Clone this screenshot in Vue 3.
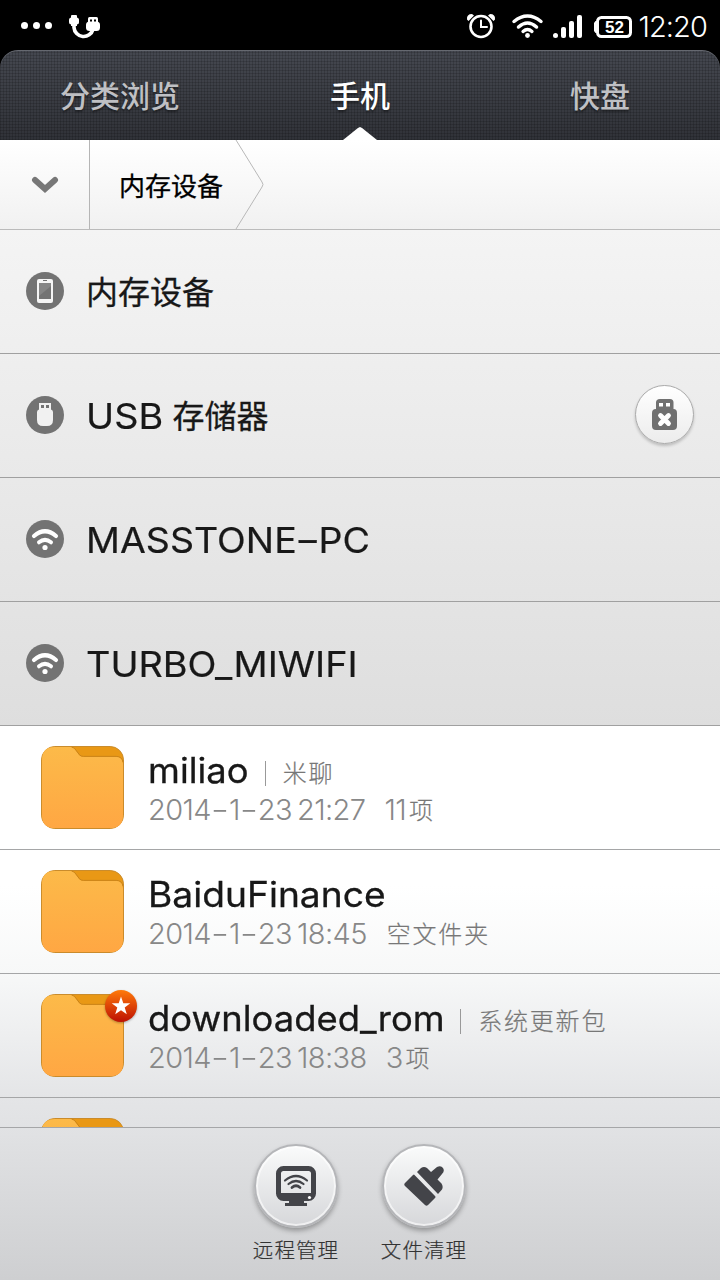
<script setup>
const tabs = [
  { name: '分类浏览', active: false },
  { name: '手机', active: true },
  { name: '快盘', active: false },
]
const devices = [
  { name: '内存设备', icon: 'phone', cls: 'cjk' },
  { name: 'USB', suffix: '存储器', icon: 'usb', cls: 'usb', eject: true },
  { name: 'MASSTONE-PC', icon: 'wifi', cls: 'mass' },
  { name: 'TURBO_MIWIFI', icon: 'wifi', cls: 'turbo' },
]
const files = [
  { name: 'miliao', note: '米聊', date: '2014-1-23', time: '21:27', num: '11', unit: '项', cls: 'f1' },
  { name: 'BaiduFinance', date: '2014-1-23', time: '18:45', num: '', unit: '空文件夹', cls: 'f2' },
  { name: 'downloaded_rom', note: '系统更新包', date: '2014-1-23', time: '18:38', num: '3', unit: '项', starred: true, cls: 'f3' },
  { name: '', cls: 'f4' },
]
// Splits a label so that hyphens can be drawn wider than the font's own.
const pieces = (s) => s.split(/(-)/)
</script>

<template>
  <div class="screen">
    <header class="status">
      <svg class="notices" width="110" height="50" viewBox="0 0 110 50">
        <g fill="#fff">
          <circle cx="24.500" cy="25.500" r="3.500" /><circle cx="36.500" cy="25.500" r="3.500" /><circle cx="48.500" cy="25.500" r="3.500" />
          <rect x="71" y="15" width="6" height="6" rx="1" />
          <rect x="69" y="17.500" width="10" height="7" rx="2.500" />
          <path d="M71 23h6v3h-6z" />
          <rect x="88" y="17" width="10" height="8" rx="1.500" />
          <rect x="86" y="21.500" width="14" height="9.500" rx="3.500" />
        </g>
        <path d="M74 24v3.500a9.700 9.700 0 0 0 19 2" fill="none" stroke="#fff" stroke-width="3.600" />
        <path d="M90 19.500h2v2h-2zM94 19.500h2v2h-2z" fill="#000" />
      </svg>
      <div class="system">
        <svg width="170" height="50" viewBox="0 0 170 50">
          <g fill="none" stroke="#fff" stroke-linecap="round">
            <circle cx="16" cy="26.500" r="10.500" stroke-width="2.600" />
            <path d="M16 20.500v6.500h6" stroke-width="2" />
            <path d="M49 21.500Q62.500 10.500 76 21.500" stroke-width="3.500" />
            <path d="M53.500 27Q62.500 19 71.500 27" stroke-width="3.500" />
            <path d="M58 31.500Q62.500 27.500 67 31.500" stroke-width="3.300" />
          </g>
          <path d="M2 19.500Q1.500 14 7 14L9 15.500 3.500 21zM30 19.500Q30.500 14 25 14L23 15.500 28.500 21z" fill="#fff" />
          <circle cx="62.500" cy="35.500" r="2.400" fill="#fff" />
          <g fill="#fff">
            <circle cx="90.500" cy="35.500" r="2.500" />
            <rect x="96" y="27" width="5" height="11" rx="2" /><rect x="104" y="21" width="5" height="17" rx="2" />
            <rect x="112" y="15" width="5" height="23" rx="2" />
            <path d="M132 21v12h-1.500l-1.500-2v-8l1.500-2z" />
          </g>
          <rect x="132.500" y="17.500" width="33" height="19" rx="4" fill="none" stroke="#fff" stroke-width="3" />
          <text x="149.500" y="33" text-anchor="middle" class="battery">52</text>
        </svg>
        <span class="clock">12:20</span>
      </div>
    </header>

    <nav class="tabs">
      <div v-for="t in tabs" :key="t.name" class="tab" :class="{ active: t.active }">{{ t.name }}</div>
    </nav>

    <div class="crumbs">
      <div class="expand">
        <svg width="28" height="20" viewBox="0 0 28 20"><path d="M4 5l10 9 10-9" fill="none" stroke="#777" stroke-width="6" stroke-linecap="round" /></svg>
      </div>
      <div class="crumb">内存设备</div>
      <svg class="chevron" width="30" height="89" viewBox="0 0 30 89"><path d="M1 0L27 42q2 2.500 0 5L1 89" fill="none" stroke="#b8b8b8" /></svg>
    </div>

    <section class="devices">
      <div v-for="d in devices" :key="d.name" class="device">
        <svg class="dicon" width="38" height="38" viewBox="0 0 38 38">
          <circle cx="19" cy="19" r="19" fill="#737373" />
          <g v-if="d.icon === 'phone'">
            <rect x="11" y="7" width="16" height="24" rx="2" fill="#f5f5f5" />
            <rect x="13" y="11" width="12" height="16" fill="#737373" />
            <path d="M25 11v3L13 24V11z" fill="#858585" />
            <path d="M17 8.500h4" stroke="#737373" />
          </g>
          <g v-else-if="d.icon === 'usb'">
            <path d="M13 7h12v6.500q2 .5 2 2.500v8q0 6-6 6h-4q-6 0-6-6v-8q0-2 2-2.500z" fill="#f1f1f1" />
            <path d="M15 9h3v3h-3zM20 9h3v3h-3z" fill="#737373" />
          </g>
          <g v-else fill="none" stroke="#fff" stroke-linecap="round">
            <path d="M8 16Q19 6.500 30 16" stroke-width="4.200" /><path d="M13 22.300Q19 17.500 25 22.300" stroke-width="4" />
            <circle cx="19" cy="27.500" r="2.600" fill="#fff" stroke="none" />
          </g>
        </svg>
        <span class="dname" :class="d.cls"><span v-for="(p, i) in pieces(d.name)" :key="i" :class="{ dash: p === '-' }">{{ p }}</span></span>
        <span v-if="d.suffix" class="dname cjk suffix">{{ d.suffix }}</span>
        <div v-if="d.eject" class="eject">
          <svg width="26" height="32" viewBox="0 0 26 32">
            <path d="M8 0h10q3.500 0 3.500 3.500V10Q25 10 25 14v13q0 4-4 4H4q-4 0-4-4V14q0-4 4-4V3.500Q4 0 8 0z" fill="#707070" />
            <path d="M7 4h4v3.500H7zM14 4h4v3.500h-4z" fill="#fff" />
            <path d="M8.500 16.500l8 8M16.500 16.500l-8 8" stroke="#fff" stroke-width="4.800" stroke-linecap="round" />
          </svg>
        </div>
      </div>
    </section>

    <main class="files">
      <div v-for="f in files" :key="f.cls" class="file" :class="f.cls">
        <div class="folder">
          <svg width="83" height="83" viewBox="0 0 84 84">
            <defs>
              <linearGradient id="fold" x1="0" y1="0" x2="0" y2="1"><stop offset="0" stop-color="#fcba49" /><stop offset="1" stop-color="#ffa743" /></linearGradient>
            </defs>
            <rect x=".5" y=".5" width="83" height="83" rx="13.500" fill="#e99815" stroke="#c98a2a" />
            <path d="M1 14Q1 1 14 1H30q3.500 0 5.500 4l3.500 4.500q1.500 1.500 4 1.500H76q7 0 7 8V70q0 13-13 13H14Q1 83 1 70z" fill="url(#fold)" />
            <path d="M31 1q3 .5 5 4l3 4q1.500 1.500 4 1.500H76q6 0 7 6" fill="none" stroke="#c98319" />
          </svg>
          <svg v-if="f.starred" class="star" width="36" height="36" viewBox="0 0 36 36">
            <defs><linearGradient id="badge" x1="0" y1="0" x2="0" y2="1"><stop offset="0" stop-color="#ff7a0a" /><stop offset="1" stop-color="#bd1003" /></linearGradient></defs>
            <circle cx="18" cy="18" r="16" fill="url(#badge)" />
            <path d="M18 8.500l2.300 6.700h7l-5.600 4.200 2.100 6.900L18 22.200l-5.800 4.100 2.100-6.900-5.600-4.200h7z" fill="#fff" />
          </svg>
        </div>
        <div v-if="f.name" class="info">
          <div class="line1">
            <span class="fname">{{ f.name }}</span>
            <i v-if="f.note" class="bar"></i>
            <span v-if="f.note" class="note">{{ f.note }}</span>
          </div>
          <div class="line2">
            <span class="date"><span v-for="(p, i) in pieces(f.date)" :key="i" :class="{ dash: p === '-' }">{{ p }}</span></span><span class="time">{{ f.time }}</span>
            <span class="count"><span class="num">{{ f.num }}</span><span class="unit">{{ f.unit }}</span></span>
          </div>
        </div>
      </div>
    </main>

    <footer class="actions">
      <div class="action">
        <div class="round">
          <svg width="40" height="40" viewBox="0 0 40 40">
            <rect x="2.500" y="2.500" width="35" height="30" rx="5" fill="none" stroke="#434449" stroke-width="5" />
            <path d="M4 27h32v6H4zM13 34h15v3h3v3H9v-3h4z" fill="#434449" />
            <circle cx="33.500" cy="31.500" r="1.600" fill="#fff" />
            <g fill="none" stroke="#434449" stroke-width="2.200" stroke-linecap="round">
              <path d="M9 14.500Q20 5.500 31 14.500" /><path d="M12.500 18Q20 12 27.500 18" /><path d="M16 21.500Q20 18 24 21.500" stroke-width="2.800" />
            </g>
          </svg>
        </div>
        <span>远程管理</span>
      </div>
      <div class="action">
        <div class="round">
          <svg width="40" height="40" viewBox="0 0 40 40" fill="#434449">
            <path d="M10.500 9L31 30q1 1 0 2l-7 7q-1.500 1.500-3 0L1 20q-1.500-1.500 0-3l8-8q1-1 1.500 0z" />
            <path d="M13 6l4-4q3-2 6 0l4 4 6-5q4-2 6 1 2 3-1 6l-4.500 5.500 4 4q2 3 .5 6L34 28z" />
          </svg>
        </div>
        <span>文件清理</span>
      </div>
    </footer>
  </div>
</template>

<style>
body { background: #000; overflow: hidden; }
</style>
<style scoped>
.screen { width: 720px; height: 1280px; display: flex; flex-direction: column; overflow: hidden; background: #000; font-family: "Inter", "Noto Sans CJK SC", sans-serif; color: #181818; }
svg { display: block; flex: none; }
.status { height: 50px; flex: none; display: flex; justify-content: space-between; color: #fff; }
.system { display: flex; margin-right: 12px; }
.battery { font: bold 17px "Liberation Sans", sans-serif; fill: #fff; }
.clock { width: 72px; text-align: right; white-space: nowrap; font: 300 29px/54px "Inter", sans-serif; letter-spacing: -0.9px; margin-right: 1px; }
.tabs { height: 90px; flex: none; display: grid; grid-template-columns: 1fr 1fr 1fr; border-radius: 18px 18px 0 0; box-shadow: inset 0 1px #666970;
  background: repeating-linear-gradient(0deg, rgba(0,0,0,.15) 0 1px, transparent 1px 3px), repeating-linear-gradient(90deg, rgba(0,0,0,.15) 0 1px, transparent 1px 3px), linear-gradient(#454850, #303238); }
.tab { position: relative; text-align: center; font: 500 30px/88px "Noto Sans CJK SC", sans-serif; color: #bfc0c4; text-shadow: 0 2px 2px rgba(0,0,0,.4); }
.tab.active { color: #fff; }
.tab.active::after { content: ""; position: absolute; left: 103px; bottom: 0; width: 34px; height: 13px; background: #fff; clip-path: polygon(0 100%, 44% 8%, 50% 0, 56% 8%, 100% 100%); }
.crumbs { height: 89px; flex: none; display: flex; background: linear-gradient(#fff, #f1f1f1); border-bottom: 1px solid #bbb; }
.expand { width: 89px; border-right: 1px solid #b5b5b5; display: flex; align-items: center; justify-content: center; }
.crumb { padding-left: 29px; width: 116px; white-space: nowrap; font: 26px/90px "Noto Sans CJK SC", sans-serif; color: #000; -webkit-text-stroke: .3px #000; }
.devices { flex: none; background: linear-gradient(#f4f4f4, #dedede); }
.device { height: 123px; border-bottom: 1px solid #a0a0a0; display: flex; align-items: center; padding: 0 26px; }
.dicon { margin-bottom: 2px; }
.dname { margin-left: 22px; font-size: 36px; line-height: 50px; white-space: nowrap; transform: scaleX(1.05); transform-origin: 0 50%; -webkit-text-stroke: .2px #181818; }
.dname.mass { transform: scaleX(1.043); }
.dname.cjk { font: 32px/50px "Noto Sans CJK SC", sans-serif; margin-bottom: 3px; transform: none; -webkit-text-stroke: .3px #181818; }
.dname.suffix { margin-left: 13px; }
.dash { display: inline-block; width: 18px; text-align: center; letter-spacing: 0; transform: scaleX(1.4); }
.dname .dash { width: 21px; transform: scaleX(1.5); }
.eject { margin-left: auto; margin-bottom: 2px; width: 57px; height: 57px; border: 1px solid #aaa; border-radius: 50%; background: linear-gradient(#fff, #ececec); box-shadow: 0 2px 3px rgba(0,0,0,.2); display: flex; align-items: center; justify-content: center; }
.files { flex: 1; min-height: 0; overflow: hidden; background: linear-gradient(#fff 0, #fff 160px, #f7f8f8 248px, #e4e5e7 371px, #e1e2e4 401px); }
.file { height: 123px; border-bottom: 1px solid #a5a6a7; display: flex; padding-left: 41px; }
.folder { position: relative; width: 83px; height: 83px; margin-top: 20px; }
.star { position: absolute; left: 62px; top: -6px; filter: drop-shadow(0 1px 1px rgba(0,0,0,.3)); }
.info { margin-left: 24px; }
.line1 { display: flex; height: 44px; margin-top: 22px; align-items: center; }
.fname { font-size: 35px; white-space: nowrap; transform: scaleX(1.04); transform-origin: 0 50%; -webkit-text-stroke: .3px #181818; }
.f2 .fname { transform: scaleX(1.062); }
.bar { width: 1px; height: 25px; background: #999; margin: 6px 17px 0 20px; }
.f3 .bar { margin-left: 27px; }
.note, .unit { font: 300 24px/34px "Noto Sans CJK SC", sans-serif; letter-spacing: 1.8px; color: #777; -webkit-text-stroke: .2px #777; }
.note { margin-top: 3px; white-space: nowrap; }
.unit { margin: -2px 0 0 3px; }
.f2 .unit { margin-left: 1px; }
.line2 { display: flex; height: 36px; align-items: center; color: #888; font: 300 29px/36px "Inter", sans-serif; letter-spacing: -.6px; white-space: nowrap; }
.time { margin-left: 5px; }
.count { display: flex; align-items: center; margin-left: 19px; }
.actions { height: 152px; flex: none; border-top: 1px solid #a5a6a8; display: flex; justify-content: center; gap: 38px; background: linear-gradient(#e1e2e4, #cecfd1); }
.action { width: 90px; display: flex; flex-direction: column; align-items: center; font: 300 20.5px/32px "Noto Sans CJK SC", sans-serif; letter-spacing: 1.1px; color: #333; }
.action span { margin-top: 5px; white-space: nowrap; -webkit-text-stroke: .2px #333; }
.round { box-sizing: border-box; width: 84px; height: 84px; margin-top: 16px; border: 2px solid #b5b6b9; border-radius: 50%; background: linear-gradient(#fafbfb, #d6d7da); box-shadow: inset 0 0 0 2px rgba(255,255,255,.6), 0 3px 5px rgba(0,0,0,.3); display: flex; align-items: center; justify-content: center; }
</style>
